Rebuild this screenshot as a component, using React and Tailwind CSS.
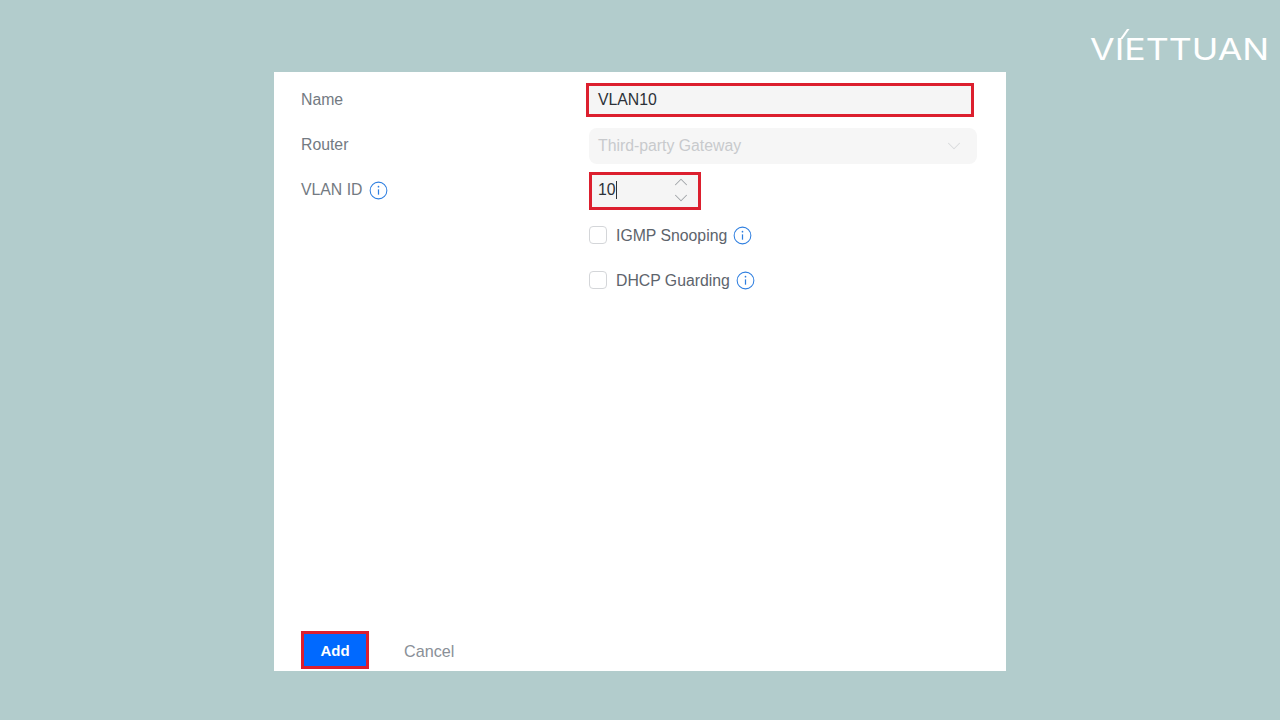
import React from "react";
import { ChevronDown, ChevronUp } from "lucide-react";

const font = { fontFamily: '"Liberation Sans", Arial, sans-serif' };

function InfoIcon({ className = "" }) {
  return (
    <svg viewBox="0 0 20 20" className={`h-[19px] w-[19px] shrink-0 ${className}`} fill="none" stroke="#2f7fe0" strokeWidth="1.1">
      <circle cx="10" cy="10" r="8.8" />
      <path d="M10 8.8v5.6" strokeWidth="1.3" />
      <circle cx="10" cy="6" r="0.9" fill="#2f7fe0" stroke="none" />
    </svg>
  );
}

function CheckRow({ label }) {
  return (
    <div className="flex h-9 items-center">
      <span className="h-[18px] w-[18px] rounded-[4px] border border-[#d4d6d9] bg-white" />
      <span className="ml-[9px] pt-[2px] text-[15.8px] text-[#5d646c]">{label}</span>
      <InfoIcon className="ml-[6px]" />
    </div>
  );
}

export default function App() {
  return (
    <div className="relative h-screen w-full overflow-hidden bg-[#b2cccc] pt-[72px]" style={font}>
      {/* logo */}
      <div className="absolute left-[1090px] top-[28px] h-[36px] w-[180px] text-white">
        <span
          className="absolute left-0 top-[3px] origin-left scale-x-[1.19] text-[30px] leading-[36px]"
          style={{ fontFamily: "Inter, sans-serif", fontWeight: 400 }}
        >
          VIETTUAN
        </span>
        <svg className="absolute left-[24px] top-0 h-[12px] w-[16px]" viewBox="0 0 16 12" fill="white">
          <path d="M6 11 13 1h2.5L8.5 11z" />
        </svg>
      </div>

      <div className="ml-[274px] flex h-[599px] w-[732px] flex-col bg-white pl-[27px] pt-[10px]">
        <div className="flex flex-col gap-[9px]">
          <div className="flex h-9 items-center">
            <span className="w-[288px] text-[15.8px] text-[#737a82]">Name</span>
            <div className="-ml-[3px] flex h-[34px] w-[388px] items-center border-[3px] border-[#dc1f2e] bg-[#f5f5f5] pl-[9px] text-[15.8px] text-[#2c3138]">
              VLAN10
            </div>
          </div>

          <div className="flex h-9 items-center">
            <span className="w-[288px] text-[15.8px] text-[#737a82]">Router</span>
            <div className="mt-[2px] flex h-9 w-[388px] items-center justify-between rounded-lg bg-[#f6f6f6] pl-[9px] pr-[12px] text-[15.8px] text-[#c8cacd]">
              Third-party Gateway
              <ChevronDown size={22} strokeWidth={1.1} color="#d8dadc" />
            </div>
          </div>

          <div className="flex h-9 items-center">
            <div className="flex w-[288px] items-center gap-[7px] text-[15.8px] text-[#737a82]">
              VLAN ID
              <InfoIcon />
            </div>
            <div className="mt-[1px] flex h-[38px] w-[112px] items-center justify-between border-[3px] border-[#dc1f2e] bg-[#f5f5f5] pl-[6px] pr-[6px] text-[15.8px] text-[#2c3138]">
              <span className="flex items-center pb-[2px]">
                10<span className="h-[18px] w-px bg-[#2c3138]" />
              </span>
              <span className="flex flex-col items-center">
                <ChevronUp size={22} strokeWidth={1.1} color="#a0a4a8" className="-mb-[3px] -mt-[1px]" />
                <ChevronDown size={22} strokeWidth={1.1} color="#a0a4a8" className="-mt-[3px]" />
              </span>
            </div>
          </div>

          <div className="ml-[288px] flex flex-col gap-[9px]">
            <CheckRow label="IGMP Snooping" />
            <CheckRow label="DHCP Guarding" />
          </div>
        </div>

        <div className="mb-[2px] mt-auto flex items-center">
          <button className="h-[38px] w-[68px] border-[3px] border-[#dc1f2e] bg-[#0069ff] pt-[2px] text-[15px] font-bold text-white">Add</button>
          <span className="ml-[35px] pt-[2px] text-[16.2px] text-[#8a9098]">Cancel</span>
        </div>
      </div>
    </div>
  );
}
